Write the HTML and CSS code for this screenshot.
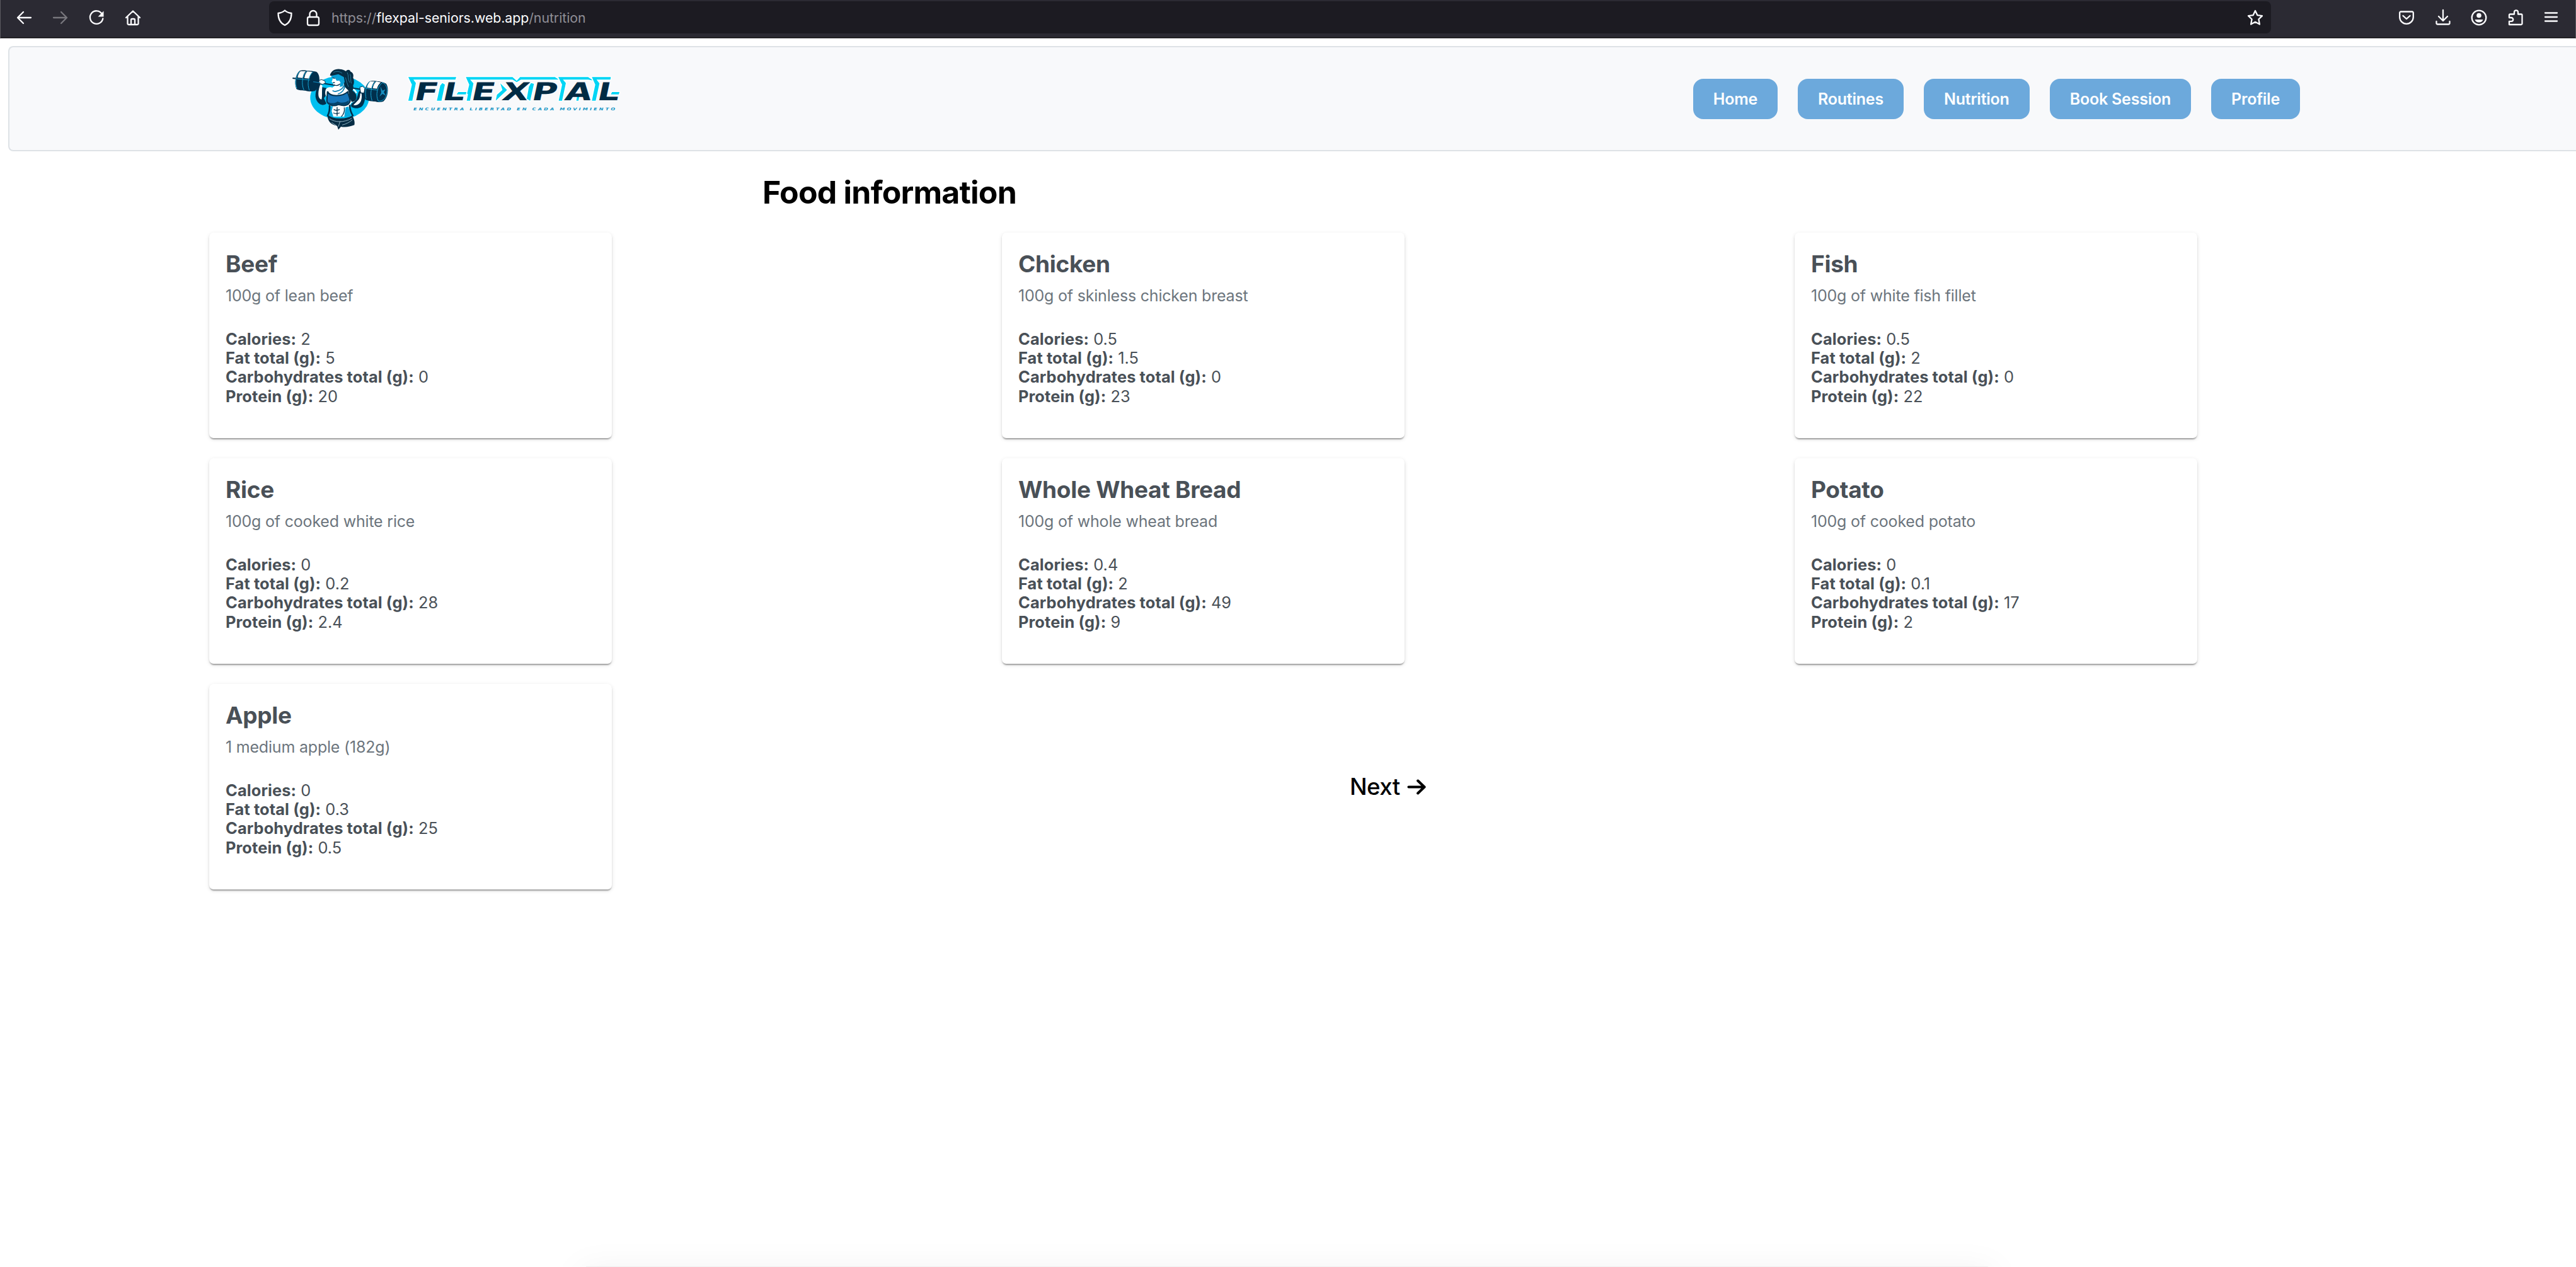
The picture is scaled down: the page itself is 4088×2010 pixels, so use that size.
FILE: index.html
```
<!DOCTYPE html>
<html lang="en">
<head>
<meta charset="utf-8">
<title>FlexPal – Nutrition</title>
<link rel="stylesheet" href="styles.css">
</head>
<body>
<div class="browser-bar">
  <div class="browser-nav">
    <svg class="ico" viewBox="0 0 28 28"><path d="M25 14H4M13 5l-9 9 9 9"/></svg>
    <svg class="ico dim" viewBox="0 0 28 28"><path d="M3 14h21M15 5l9 9-9 9"/></svg>
    <svg class="ico" viewBox="0 0 28 28"><path d="M22.500 7.500A10.300 10.300 0 1 0 24.300 15.500"/><path class="solid" d="M25.500 3.500v9h-9z"/></svg>
    <svg class="ico" viewBox="0 0 28 28"><path d="M3 14 14 3.500 25 14M5.500 12v11.500a1.500 1.500 0 0 0 1.500 1.500h14a1.500 1.500 0 0 0 1.500-1.500V12M11 25v-7.500a1.500 1.500 0 0 1 1.500-1.500h3a1.500 1.500 0 0 1 1.500 1.500V25"/></svg>
  </div>
  <div class="url-bar">
    <svg class="ico" viewBox="0 0 28 28"><path d="M14 2.500C11 5.500 7 6.500 3.500 7c0 9 3 15.500 10.500 19 7.500-3.500 10.500-10 10.500-19C21 6.500 17 5.500 14 2.500z"/></svg>
    <svg class="ico" viewBox="0 0 28 28"><rect x="5" y="13" width="18" height="13" rx="2.500"/><path d="M8.500 13V8.500a5.500 5.500 0 0 1 11 0V13"/></svg>
    <div class="url">https://<b>flexpal-seniors.web.app</b>/nutrition</div>
    <svg class="ico star" viewBox="0 0 28 28"><path d="M14 3l3.300 7.100 7.700 1-5.600 5.400 1.500 8L14 20.800l-6.900 3.700 1.500-8L3 11.100l7.700-1z"/></svg>
  </div>
  <div class="browser-tools">
    <svg class="ico" viewBox="0 0 28 28"><path d="M5 4.500h18a1.800 1.800 0 0 1 1.800 1.800V13a10.800 10.800 0 0 1-21.600 0V6.300A1.800 1.800 0 0 1 5 4.500zM8.500 11l5.500 5 5.500-5"/></svg>
    <svg class="ico" viewBox="0 0 28 28"><path d="M14 2v17M7 12l7 7 7-7M3.500 20v2.500a2 2 0 0 0 2 2h17a2 2 0 0 0 2-2V20"/></svg>
    <svg class="ico" viewBox="0 0 28 28"><circle cx="14" cy="14" r="11.300"/><circle class="solid" cx="14" cy="10.500" r="3.800"/><path class="solid" d="M7.500 17h13c-.8 3-3.500 4.500-6.500 4.500S8.300 20 7.500 17z"/></svg>
    <svg class="ico" viewBox="0 0 28 28"><path d="M4 25h19a1.500 1.500 0 0 0 1.500-1.500V10a1.500 1.500 0 0 0-1.500-1.500h-5V5.300a3 3 0 0 0-6 0v3.200H5.500A1.500 1.500 0 0 0 4 10v4h3.300a2.900 2.900 0 0 1 0 5.800H4z"/></svg>
    <svg class="ico" viewBox="0 0 28 28"><path d="M4 6.500h19M4 13h19M4 19.500h19"/></svg>
  </div>
</div>

<header class="site-header">
  <svg class="athlete" viewBox="0 0 510 345">
    <ellipse cx="252" cy="168" rx="140" ry="103" fill="#00bff0"/>
    <path d="M28 75 60 79M150 96 400 136" stroke="#00304d" stroke-width="6" fill="none"/>
    <!-- arms -->
    <path d="M155 92c-10 20-18 44-18 70 2 20 14 36 30 40 10 2 18-2 22-6l-12-26 14-18-2-30-26-6 4-22z" fill="#00304d"/>
    <path d="M160 104c-6 18-12 38-8 58 2 8 8 14 14 14 4-18 0-34 4-66zM186 128c8-10 20-12 32-8l-18 18-12 24c-6-10-6-24-2-34z" fill="#fff"/>
    <path d="M358 122l14 14c4 22 2 48-8 66-8 14-28 22-52 12-8-4-6-12-2-18l22-20 10-34z" fill="#00304d"/>
    <path d="M350 148c0 20-6 30-18 40-6 6-12 10-14 16 18 2 30-8 36-22 4-14 4-24 2-34z" fill="#fff"/>
    <path d="M152 86l14-4 16 6 2 10-12 6-20-4zM348 118l14-4 10 10-4 22-16-2z" fill="#fff" stroke="#00304d" stroke-width="3"/>
    <!-- torso -->
    <path d="M238 104l-24 18-18 20 0 50 14 20-6 46 96 0-4-46 12-20 14-6c12-14 10-34 0-44-14-12-32-20-48-26l2-30z" fill="#fff"/>
    <path d="M292 128c26 4 42 18 40 40-2 14-12 20-22 20l-10-18z" fill="#062d45"/>
    <path d="M300 122c16 4 28 12 32 24" fill="none" stroke="#fff" stroke-width="7"/>
    <path d="M276 90c2 22-12 40-36 46-8 4-16 2-22-2M278 110c-4 20-16 36-34 40" fill="none" stroke="#0a7fb4" stroke-width="5"/>
    <path d="M204 208l16 0-6 24 8 26-20 0zM280 214l14-4 10 48-30 0z" fill="#06a8dd"/>
    <!-- hair behind the face -->
    <path d="M206 62c4-20 22-32 46-30 12 0 22 4 30 10 6-10 20-8 22 2 12 4 16 16 12 28 6 14 6 28 0 38 4 12 0 24-8 28-14-2-26-12-32-26l-8-24-24-18-20-4z" fill="#052c44"/>
    <path d="M222 48c14-8 30-6 42 4M288 48c8 14 2 32 12 48M302 56c6 14 0 32 6 44M280 72c4 16 8 30 14 44" fill="none" stroke="#2f88a8" stroke-width="2.500"/>
    <!-- face and neck -->
    <path d="M218 66l22-6 24 10 8 16-2 20-22 8-14-2-12-6-2-8-6-6 4-10z" fill="#fff"/>
    <path d="M212 64l34-8 26 14 4 22-10 22-14 2 4-20-6-10-12 2-8-14-16 0z" fill="#089fd6"/>
    <path d="M218 74l12 2M220 96l9 0M224 106c10 6 22 4 30-4" stroke="#00304d" stroke-width="4" fill="none"/>
    <!-- top -->
    <path d="M194 138c6 14 22 20 42 20 22 0 40-4 54-18 4 16 12 30 12 44-6 18-22 24-38 20-10-2-16-4-22-2-16 8-42 2-50-14-2-16 2-34 2-50z" fill="#1675b9" stroke="#00304d" stroke-width="6"/>
    <path d="M196 188c12 8 34 8 46-2 14 8 36 8 54-6-2 20-20 26-36 22l-18-2c-18 8-44 2-46-12z" fill="#04436b"/>
    <!-- waist -->
    <path d="M204 204c2 20-2 36-10 52M300 202c0 22 6 38 16 54" stroke="#00304d" stroke-width="8" fill="none"/>
    <path d="M240 212v42M224 224q12 8 28 0M222 240q14 8 30 0M274 214q4 26-14 44" stroke="#00304d" stroke-width="4" fill="none"/>
    <!-- shorts -->
    <path d="M194 250c20 14 44 18 64 16 22 0 40-4 54-14 8 16 14 32 10 46-20 8-42 12-64 8l-12 14-6-18c-30-4-46-24-46-52z" fill="#062d45"/>
    <path d="M204 268c26 18 66 20 106-2M214 286c8 6 14 10 22 14M264 298c18-4 36-14 48-24M254 280l-8 26" stroke="#a9cad8" stroke-width="2.500" fill="none"/>
    <!-- left plates -->
    <path d="M62 40c8-4 34-2 36 0 6-2 32 2 42 4 22 10 22 70-6 92-12 4-36 2-46-2-10 0-32 0-42-8-12-30-4-70 16-86z" fill="#00304d"/>
    <path d="M66 42l24 0c-8 10-12 20-14 32l-24-2c2-12 6-22 14-30zM98 43l24 2c-8 10-12 20-14 32l-24-2c2-12 6-24 14-32z" fill="#fff"/>
    <path d="M48 78l62 6M96 40c-22 24-28 60-14 92M126 44c-24 22-30 58-18 90M62 42c-20 24-24 56-14 82" fill="none" stroke="#16a4d4" stroke-width="3"/>
    <path d="M126 92l34 5" stroke="#0d7cae" stroke-width="4"/>
    <!-- right plates -->
    <path d="M394 90c10-4 34-2 38 0 10 0 34 6 42 12 14 22 8 66-14 84-12 4-28 4-38 0-14 0-40-4-48-10-10-28 0-70 20-86z" fill="#00304d"/>
    <path d="M396 91l22 0c-8 10-12 20-14 32l-22-3c2-12 6-22 14-29zM426 91l22 4c-10 8-16 18-18 30l-20-2c2-14 8-24 16-32z" fill="#fff"/>
    <path d="M378 124l54 8M422 90c-22 26-26 60-16 92M456 96c-26 20-34 60-20 88 24 4 42-20 42-50 0-18-8-32-22-38zM394 92c-20 26-22 56-16 80" fill="none" stroke="#16a4d4" stroke-width="3"/>
    <path d="M446 114l10 20 14-6-8 14 10 16-16-8-14 12 8-18z" fill="#168fc0"/>
  </svg>
  <svg class="wordmark" viewBox="0 0 1050 255">
    <g fill="#00d5f5" stroke="#fff" stroke-width="10" stroke-linejoin="round" paint-order="stroke">
      <path d="M24 52H252L248 64H48L60 80 43 164H24L41 88z"/>
      <path d="M186 80 198 88 182 164H160L176 92z"/>
      <path d="M262 123H302L298 134H254z"/>
      <path d="M298 52H520L540 70 556 52H722L740 64H560L540 76 520 64H318L334 82 318 164H302L308 134 304 130 314 88z"/>
      <path d="M462 82 494 113 440 164 446 136 472 113z"/>
      <path d="M608 80 622 84 604 164 588 155 598 98z"/>
      <path d="M738 52H880L904 68 880 64H760L774 80 756 164H740L756 88z"/>
      <path d="M828 140 840 134 834 164H824z"/>
      <path d="M898 52H988L986 64H920L934 82 916 164H898L914 88z"/>
      <path d="M994 123H1029L1026 134H988z"/>
    </g>
    <text class="brand" transform="translate(0 162) skewX(-12) scale(1.4 1)" x="33 130 227 332 433 546 656">FLEXPAL</text>
    <text class="tagline" x="48" y="211" textLength="970" lengthAdjust="spacingAndGlyphs">ENCUENTRA LIBERTAD EN CADA MOVIMIENTO</text>
  </svg>
  <nav class="site-nav">
    <a>Home</a><a>Routines</a><a>Nutrition</a><a>Book Session</a><a>Profile</a>
  </nav>
</header>

<main>
  <h1>Food information</h1>
  <div class="foods">
    <article class="card"><h2>Beef</h2><p class="serving">100g of lean beef</p>
      <p><b>Calories:</b> 2</p><p><b>Fat total (g):</b> 5</p><p><b>Carbohydrates total (g):</b> 0</p><p><b>Protein (g):</b> 20</p></article>
    <article class="card"><h2>Chicken</h2><p class="serving">100g of skinless chicken breast</p>
      <p><b>Calories:</b> 0.5</p><p><b>Fat total (g):</b> 1.5</p><p><b>Carbohydrates total (g):</b> 0</p><p><b>Protein (g):</b> 23</p></article>
    <article class="card"><h2>Fish</h2><p class="serving">100g of white fish fillet</p>
      <p><b>Calories:</b> 0.5</p><p><b>Fat total (g):</b> 2</p><p><b>Carbohydrates total (g):</b> 0</p><p><b>Protein (g):</b> 22</p></article>
    <article class="card"><h2>Rice</h2><p class="serving">100g of cooked white rice</p>
      <p><b>Calories:</b> 0</p><p><b>Fat total (g):</b> 0.2</p><p><b>Carbohydrates total (g):</b> 28</p><p><b>Protein (g):</b> 2.4</p></article>
    <article class="card"><h2>Whole Wheat Bread</h2><p class="serving">100g of whole wheat bread</p>
      <p><b>Calories:</b> 0.4</p><p><b>Fat total (g):</b> 2</p><p><b>Carbohydrates total (g):</b> 49</p><p><b>Protein (g):</b> 9</p></article>
    <article class="card"><h2>Potato</h2><p class="serving">100g of cooked potato</p>
      <p><b>Calories:</b> 0</p><p><b>Fat total (g):</b> 0.1</p><p><b>Carbohydrates total (g):</b> 17</p><p><b>Protein (g):</b> 2</p></article>
    <article class="card"><h2>Apple</h2><p class="serving">1 medium apple (182g)</p>
      <p><b>Calories:</b> 0</p><p><b>Fat total (g):</b> 0.3</p><p><b>Carbohydrates total (g):</b> 25</p><p><b>Protein (g):</b> 0.5</p></article>
    <a class="next">Next <svg viewBox="0 0 28 24"><path d="M2 12h24M16 2.500l10 9.500-10 9.500"/></svg></a>
  </div>
</main>
<div class="dock-shadow"></div>
</body>
</html>
```
FILE: styles.css
```
* { box-sizing: border-box; }

body {
  margin: 0;
  height: 2010px;
  position: relative;
  overflow: hidden;
  background: #fff;
  font-family: Inter, "Liberation Sans", sans-serif;
}

h1, h2, p { margin: 0; }

/* Browser toolbar */
.browser-bar {
  display: flex;
  align-items: flex-start;
  height: 61px;
  background: #2b2a33;
  border-bottom: 1px solid #5b5a60;
  border-left: 1px solid #5b5a60;
  border-right: 1px solid #5b5a60;
  box-shadow: inset 0 -1px 0 #0c0c0d;
}

.ico {
  width: 28px;
  height: 28px;
  flex: none;
  fill: none;
  stroke: #fbfbfe;
  stroke-width: 2.3;
  stroke-linecap: round;
  stroke-linejoin: round;
}
.ico .solid { fill: #fbfbfe; stroke: none; }
.ico.dim { stroke: #78777d; }

.browser-nav {
  display: flex;
  gap: 29.500px;
  width: 426px;
  padding: 14px 0 0 23px;
}

.url-bar {
  display: flex;
  align-items: center;
  width: 3177px;
  height: 51px;
  margin-top: 2px;
  padding: 0 11px 0 11px;
  border-radius: 8px;
  background: #1c1b22;
}
.url-bar .ico + .ico { margin-left: 17px; }
.url {
  margin-left: 15px;
  font-size: 21.3px;
  line-height: 30px;
  letter-spacing: -0.05px;
  color: #8f8e96;
}
.url b { font-weight: 400; color: #fbfbfe; }
.url-bar .star { margin-left: auto; }

.browser-tools {
  display: flex;
  gap: 29.500px;
  margin-left: auto;
  padding: 14px 24px 0 0;
}

/* Site header */
.site-header {
  display: flex;
  align-items: center;
  height: 167px;
  margin: 12px 0 0 13px;
  padding: 0 438px 0 440px;
  border: 2px solid #dee2e6;
  border-right: 0;
  border-radius: 8px 0 0 8px;
  background: #f8f9fb;
}
.athlete { width: 170px; height: 115px; }
.wordmark { width: 350px; height: 85px; margin: 0 0 18px 15px; }
.brand { font: 700 117px "DejaVu Sans", sans-serif; fill: #002b44; }
.tagline { font: italic 700 18px "DejaVu Sans", sans-serif; letter-spacing: 7px; fill: #1294c4; }

.site-nav {
  display: flex;
  gap: 32px;
  margin-left: auto;
}
.site-nav a {
  padding: 0 32px;
  border-radius: 16px;
  background: #6ca9dc;
  color: #fff;
  font-size: 25px;
  font-weight: 600;
  line-height: 64px;
  letter-spacing: -0.22px;
}

/* Food list */
main { padding: 33px 0 0 332px; }
h1 {
  margin-left: 878px;
  font-size: 50px;
  font-weight: 700;
  line-height: 64px;
  letter-spacing: -0.8px;
  color: #000;
}

.foods {
  display: grid;
  grid-template-columns: repeat(3, 1258px);
  grid-auto-rows: 326px;
  gap: 32px 0;
  margin-top: 32px;
}

.card {
  width: 639px;
  padding: 26px 26px 0;
  border-radius: 7px;
  background: #fff;
  box-shadow: 0 4px 2px -2px rgba(0, 0, 0, .2), 0 2px 2px rgba(0, 0, 0, .14), 0 2px 6px rgba(0, 0, 0, .12);
  color: #495057;
  font-size: 25.4px;
  line-height: 30.4px;
}
.card h2 {
  font-size: 37px;
  font-weight: 700;
  line-height: 48px;
  letter-spacing: -0.3px;
}
.card b { font-weight: 700; letter-spacing: 0.1px; }
.card .serving {
  margin: 8px 0 35.500px;
  font-size: 25px;
  line-height: 36px;
  letter-spacing: -0.2px;
  color: #6c757d;
}

.next {
  display: flex;
  align-items: center;
  gap: 11px;
  margin-left: 552px;
  font-size: 36.500px;
  font-weight: 500;
  letter-spacing: -0.5px;
  color: #000;
}
.next svg {
  width: 30px;
  height: 25px;
  fill: none;
  stroke: #000;
  stroke-width: 4;
  stroke-linecap: round;
  stroke-linejoin: round;
}

/* Shadow cast by the dock just under the window */
.dock-shadow {
  position: absolute;
  bottom: 0;
  left: 930px;
  width: 2225px;
  height: 1px;
  border-radius: 1px;
  background: #f1f1f1;
  box-shadow: 0 22px 55px 8px rgba(0, 0, 0, .13);
}
```
